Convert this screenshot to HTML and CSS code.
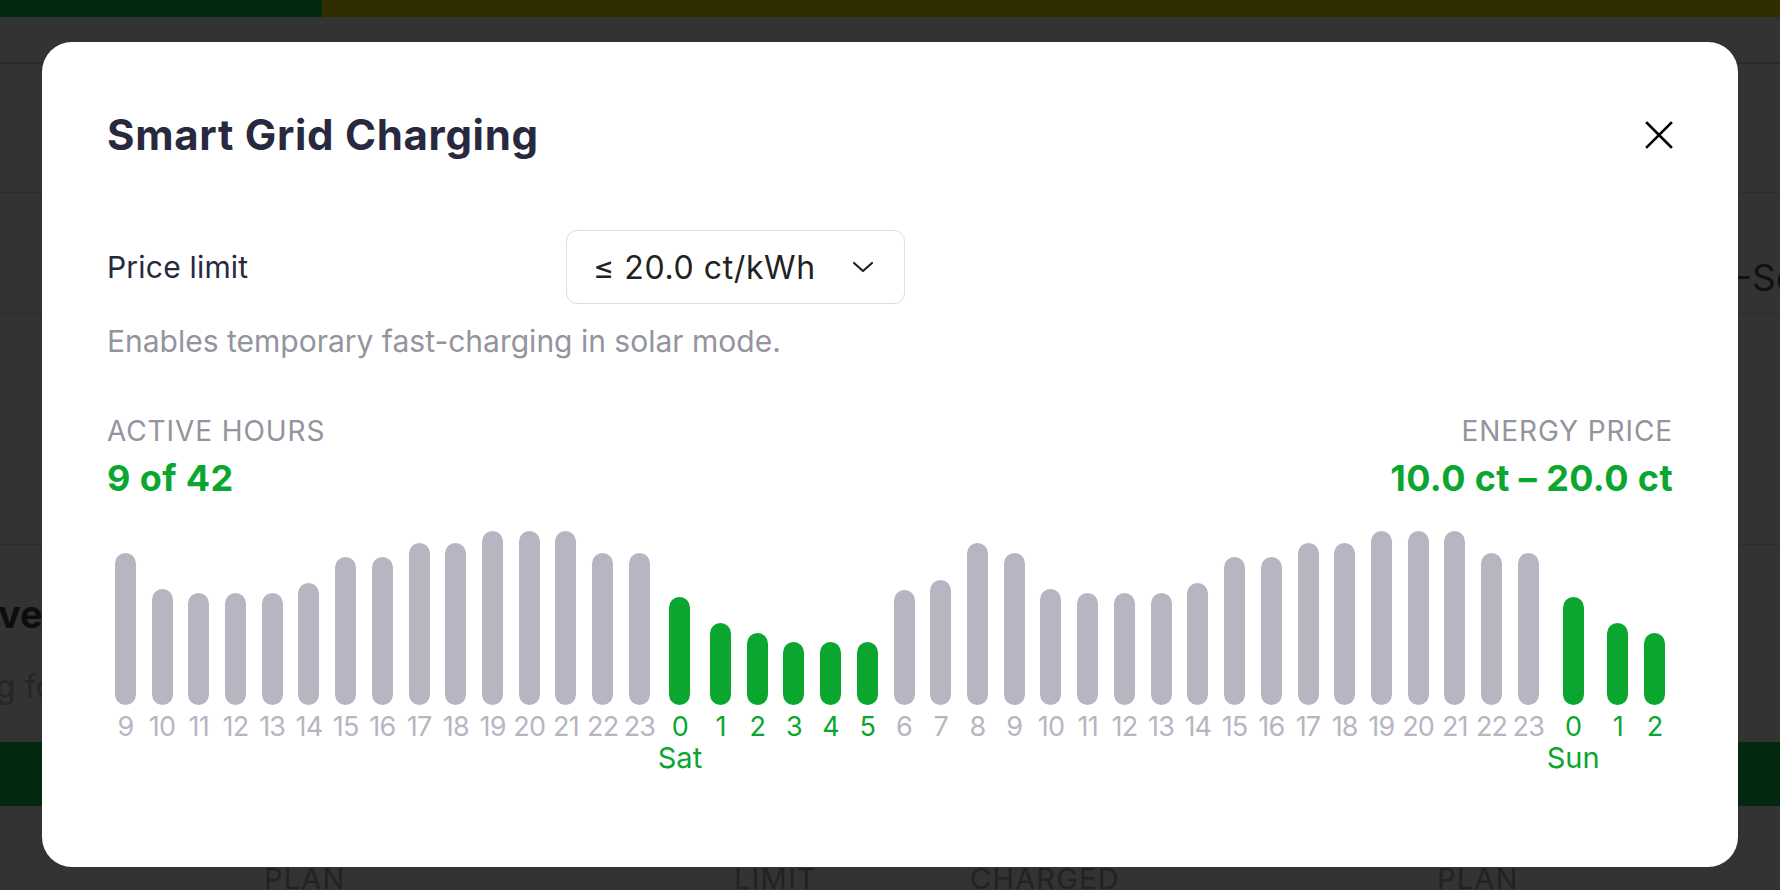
FILE: index.html
```html
<!DOCTYPE html>
<html lang="en">
<head>
<meta charset="utf-8">
<title>Smart Grid Charging</title>
<link rel="stylesheet" href="styles.css">
</head>
<body>
<div class="page">
  <div class="topbar"><div class="tb-green"></div><div class="tb-olive"></div></div>
  <div class="nav"></div>
  <div class="band band-a"></div>
  <div class="band band-b"><span class="so">-So</span></div>
  <div class="band band-c"></div>
  <div class="band band-d">
    <div class="bg-title">ve</div>
    <div class="bg-sub">g fo</div>
  </div>
  <div class="bg-green"></div>
  <div class="bg-labels"><span>PLAN</span><span>LIMIT</span><span>CHARGED</span><span>PLAN</span></div>
</div>

<div class="modal">
  <div class="modal-header">
    <h2 class="modal-title">Smart Grid Charging</h2>
    <button class="close" aria-label="Close">
      <svg width="28" height="28" viewBox="0 0 28 28"><path d="M2 2 L26 26 M26 2 L2 26" stroke="#000" stroke-width="2.6" fill="none" stroke-linecap="square"/></svg>
    </button>
  </div>

  <div class="form-row">
    <label class="form-label">Price limit</label>
    <div class="select">
      <span>≤ 20.0 ct/kWh</span>
      <svg width="22" height="12" viewBox="0 0 22 12"><path d="M2 2 L11 10 L20 2" stroke="#222" stroke-width="2.2" fill="none" stroke-linecap="round" stroke-linejoin="round"/></svg>
    </div>
  </div>
  <p class="help">Enables temporary fast-charging in solar mode.</p>

  <div class="stats">
    <div class="stat">
      <div class="stat-label">ACTIVE HOURS</div>
      <div class="stat-value">9 of 42</div>
    </div>
    <div class="stat stat-right">
      <div class="stat-label">ENERGY PRICE</div>
      <div class="stat-value">10.0 ct – 20.0 ct</div>
    </div>
  </div>

  <div class="chart" id="chart"></div>
</div>

<script>
(function(){
  var hours = [9,10,11,12,13,14,15,16,17,18,19,20,21,22,23,0,1,2,3,4,5,6,7,8,9,10,11,12,13,14,15,16,17,18,19,20,21,22,23,0,1,2];
  var heights = [152,116,112,112,112,122,148,148,162,162,174,174,174,152,152,108,82,72,63,63,63,115,125,162,152,116,112,112,112,122,148,148,162,162,174,174,174,152,152,108,82,72];
  var active = {15:1,16:1,17:1,18:1,19:1,20:1,39:1,40:1,41:1};
  var days = {15:'Sat',39:'Sun'};
  var chart = document.getElementById('chart');
  var html = '';
  for (var i=0;i<hours.length;i++){
    var cls = active[i] ? 'col active' : 'col';
    html += '<div class="'+cls+'"><div class="bar-wrap"><div class="bar" style="height:'+heights[i]+'px"></div></div>'+
      '<div class="hour">'+hours[i]+'</div><div class="day">'+(days[i]||'')+'</div></div>';
  }
  chart.innerHTML = html;
})();
</script>
</body>
</html>
```
FILE: styles.css
```css
* { box-sizing: border-box; }
html, body { margin: 0; padding: 0; }
body {
  width: 1780px;
  height: 890px;
  overflow: hidden;
  background: #333333;
  font-family: Inter, "Noto Sans", sans-serif;
  position: relative;
}

/* background page (under the dark backdrop) */
.page { width: 1780px; height: 890px; display: flex; flex-direction: column; }
.topbar { height: 17px; display: flex; flex-shrink: 0; }
.tb-green { width: 322px; background: #022a0e; }
.tb-olive { flex: 1; background: #302e00; }
.nav { height: 47px; border-bottom: 2px solid #2a2a2a; flex-shrink: 0; }
.band { border-bottom: 1px solid #2c2c2c; flex-shrink: 0; }
.band-a { height: 129px; }
.band-b { height: 121px; display: flex; align-items: center; justify-content: flex-end; padding-top: 48px; }
.so { font-size: 37px; color: #111; margin-right: -18px; }
.band-c { height: 231px; }
.band-d { height: 197px; border-bottom: none; padding-top: 46px; }
.bg-title { font-size: 38px; font-weight: 700; color: #0d0d0d; margin-left: -2px; }
.bg-sub { font-size: 32px; color: #262626; margin-top: 30px; margin-left: -4px; }
.bg-green { height: 64px; background: #02290d; flex-shrink: 0; }
.bg-labels {
  display: grid;
  grid-template-columns: 264px 470px 236px 467px auto;
  padding-top: 58px;
  font-size: 29px;
  letter-spacing: 1.2px;
  color: #222;
  line-height: 1;
  flex-shrink: 0;
}
.bg-labels span:nth-child(1) { grid-column: 2; }
.bg-labels span:nth-child(2) { grid-column: 3; }
.bg-labels span:nth-child(3) { grid-column: 4; }
.bg-labels span:nth-child(4) { grid-column: 5; }

/* modal */
.modal {
  position: absolute;
  left: 42px;
  top: 42px;
  width: 1696px;
  height: 825px;
  background: #ffffff;
  border-radius: 30px;
  padding: 68px 65px 0 65px;
  color: #28293e;
}
.modal-header {
  display: flex;
  align-items: center;
  justify-content: space-between;
  height: 50px;
}
.modal-title {
  margin: 0;
  font-size: 42px;
  font-weight: 700;
  line-height: 50px;
  color: #28293e;
  letter-spacing: 0.7px;
}
.close {
  border: 0;
  background: transparent;
  padding: 0;
  width: 28px;
  height: 28px;
  margin-right: 0;
  display: flex;
}

.form-row {
  display: grid;
  grid-template-columns: 459px 339px;
  align-items: center;
  margin-top: 70px;
}
.form-label { font-size: 30px; color: #28293e; letter-spacing: 0.2px; }
.select {
  height: 74px;
  border: 1.5px solid #dedee3;
  border-radius: 11px;
  display: flex;
  align-items: center;
  justify-content: space-between;
  padding: 0 30px 0 26px;
  font-size: 32px;
  color: #222;
  letter-spacing: 0.6px;
}
.help {
  margin: 19px 0 0 0;
  font-size: 30px;
  line-height: 36px;
  color: #93949e;
  letter-spacing: 0;
}

.stats {
  display: flex;
  justify-content: space-between;
  margin-top: 54px;
}
.stat-label {
  font-size: 28px;
  line-height: 36px;
  color: #93949e;
  letter-spacing: 0.9px;
}
.stat-value {
  margin-top: 7px;
  font-size: 36px;
  line-height: 44px;
  font-weight: 700;
  color: #0ba630;
  letter-spacing: 0.4px;
}
.stat-right { text-align: right; }

.chart {
  display: grid;
  grid-template-columns: repeat(42, 1fr);
  margin-top: 31px;
}
.col { display: flex; flex-direction: column; align-items: center; }
.bar-wrap {
  height: 174px;
  width: 100%;
  display: flex;
  align-items: flex-end;
  justify-content: center;
}
.bar {
  width: 21px;
  border-radius: 11px;
  background: #b6b6c2;
}
.hour {
  margin-top: 7px;
  font-size: 27px;
  line-height: 30px;
  color: #b6b6c2;
  white-space: nowrap;
  letter-spacing: -0.8px;
}
.day {
  margin-top: 0;
  font-size: 29px;
  line-height: 32px;
  color: #0ba630;
  white-space: nowrap;
  height: 32px;
}
.col.active .bar { background: #0ba630; }
.col.active .hour { color: #0ba630; }
```
